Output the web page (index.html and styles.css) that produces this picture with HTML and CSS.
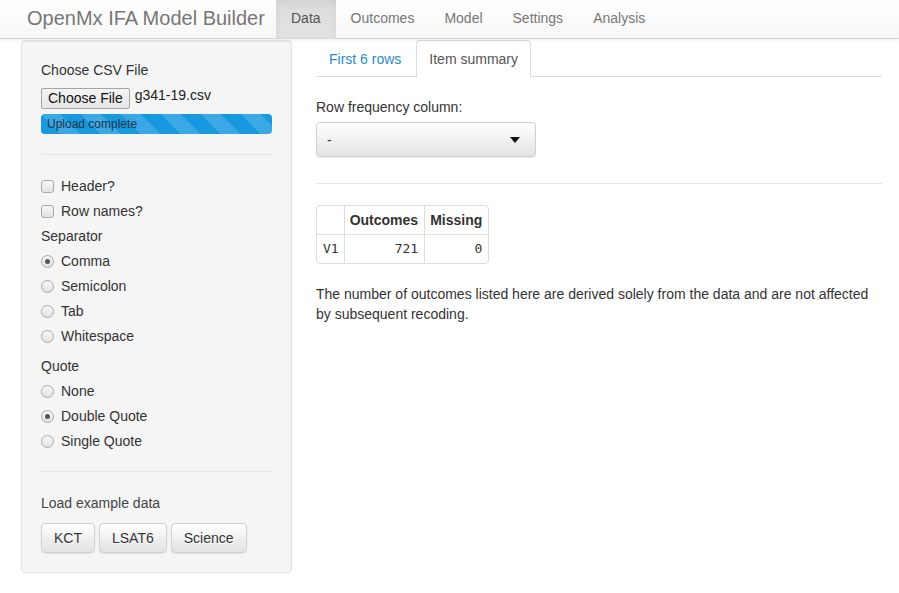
FILE: index.html
```html
<!DOCTYPE html>
<html>
<head>
<meta charset="utf-8">
<title>OpenMx IFA Model Builder</title>
<link rel="stylesheet" href="styles.css">
</head>
<body>
<div class="navbar">
  <span class="brand">OpenMx IFA Model Builder</span>
  <ul class="nav">
    <li class="active"><a>Data</a></li>
    <li><a>Outcomes</a></li>
    <li><a>Model</a></li>
    <li><a>Settings</a></li>
    <li><a>Analysis</a></li>
  </ul>
</div>
<div class="page">
  <div class="well">
    <div class="label first">Choose CSV File</div>
    <div class="file-row">
      <span class="file-btn">Choose File</span>
      <span class="file-name">g341-19.csv</span>
    </div>
    <div class="progress"><div class="progress-bar">Upload complete</div></div>
    <div class="rule"></div>
    <div class="opt"><span class="cb"></span>Header?</div>
    <div class="opt"><span class="cb"></span>Row names?</div>
    <div class="label">Separator</div>
    <div class="opt"><span class="rb on"></span>Comma</div>
    <div class="opt"><span class="rb"></span>Semicolon</div>
    <div class="opt"><span class="rb"></span>Tab</div>
    <div class="opt"><span class="rb"></span>Whitespace</div>
    <div class="label group">Quote</div>
    <div class="opt"><span class="rb"></span>None</div>
    <div class="opt"><span class="rb on"></span>Double Quote</div>
    <div class="opt"><span class="rb"></span>Single Quote</div>
    <div class="rule rule2"></div>
    <div class="label example">Load example data</div>
    <div class="btns">
      <span class="btn">KCT</span>
      <span class="btn">LSAT6</span>
      <span class="btn">Science</span>
    </div>
  </div>
  <div class="main">
    <ul class="tabs">
      <li><a class="tab link">First 6 rows</a></li>
      <li><a class="tab current">Item summary</a></li>
    </ul>
    <div class="label field">Row frequency column:</div>
    <div class="select"><span>-</span><span class="caret"></span></div>
    <div class="hr"></div>
    <table class="summary">
      <thead>
        <tr><th></th><th>Outcomes</th><th>Missing</th></tr>
      </thead>
      <tbody>
        <tr><td class="name">V1</td><td>721</td><td>0</td></tr>
      </tbody>
    </table>
    <p class="note">The number of outcomes listed here are derived solely from the data and are not affected by subsequent recoding.</p>
  </div>
</div>
</body>
</html>
```

FILE: styles.css
```css
* { box-sizing: border-box; }
html, body { margin: 0; padding: 0; }
body {
  font-family: "Liberation Sans", Arial, sans-serif;
  font-size: 14px;
  line-height: 20px;
  color: #333;
  background: #fff;
}
ul { list-style: none; margin: 0; padding: 0; }

.navbar {
  display: flex;
  height: 39px;
  background: linear-gradient(to bottom, #ffffff 0%, #f7f7f7 100%);
  border-bottom: 1px solid #d6d6d6;
  box-shadow: 0 1px 4px rgba(0,0,0,0.07);
  position: relative;
  z-index: 2;
}
.brand {
  font-size: 20px;
  line-height: 36px;
  color: #777;
  padding: 0 10px 0 27px;
  width: 276px;
  white-space: nowrap;
}
.nav { display: flex; }
.nav a {
  display: block;
  padding: 0 15px;
  line-height: 37px;
  height: 38px;
  color: #777;
}
.nav .active a {
  color: #555;
  background: linear-gradient(to bottom, #dcdcdc 0%, #e3e3e3 100%);
  box-shadow: inset 0 3px 9px rgba(0,0,0,0.06);
}

.page {
  display: flex;
  align-items: flex-start;
  gap: 24px;
  padding: 1px 17px 0 21px;
}

.well {
  width: 271px;
  flex: none;
  background: #f5f5f5;
  border: 1px solid #e3e3e3;
  border-radius: 4px;
  box-shadow: inset 0 1px 1px rgba(0,0,0,0.04);
  padding: 19px 19px 19px 19px;
}
.label { height: 20px; }
.label.first { margin-bottom: 8px; }
.file-row { display: flex; align-items: flex-start; height: 21px; }
.file-btn {
  display: inline-block;
  height: 21px;
  line-height: 18px;
  padding: 0 6px;
  border: 1px solid #a5a5a5;
  border-radius: 2px;
  background: linear-gradient(to bottom, #f4f4f4, #e6e6e6);
  color: #111;
}
.file-name { margin-left: 5px; line-height: 14px; color: #222; }

.progress {
  margin-top: 5px;
  height: 20px;
  border-radius: 4px;
  overflow: hidden;
  background: #e5e5e5;
}
.progress-bar {
  height: 20px;
  width: 100%;
  background-color: #1899df;
  background-image: linear-gradient(45deg, rgba(255,255,255,0.15) 25%, transparent 25%, transparent 50%, rgba(255,255,255,0.15) 50%, rgba(255,255,255,0.15) 75%, transparent 75%, transparent);
  background-size: 40px 40px;
  font-size: 12px;
  line-height: 20px;
  padding-left: 6px;
  color: #1f3444;
}
.rule {
  margin: 20px 0 21px;
  border-top: 1px solid #e6e6e6;
}
.rule2 { margin: 20px 0 21px; }

.opt {
  display: flex;
  align-items: center;
  height: 20px;
  margin-bottom: 5px;
  color: #333;
}
.opt .cb, .opt .rb {
  width: 13px;
  height: 13px;
  margin-right: 7px;
  flex: none;
  border: 1px solid #a9a9a9;
  background: linear-gradient(to bottom, #f8f8f8, #e2e2e2);
}
.cb { border-radius: 3px; }
.rb { border-radius: 50%; position: relative; }
.rb.on::after {
  content: "";
  position: absolute;
  left: 3px;
  top: 3px;
  width: 5px;
  height: 5px;
  border-radius: 50%;
  background: #555;
}
.label + .opt { margin-top: 5px; }
.label.group { margin-top: 10px; }
.label.example { color: #444; }

.btns { display: flex; gap: 4px; margin-top: 10px; }
.btn {
  display: inline-block;
  height: 30px;
  line-height: 20px;
  padding: 4px 12px;
  border: 1px solid #d0d0d0;
  border-radius: 4px;
  background: linear-gradient(to bottom, #ffffff 0%, #e2e2e2 100%);
  box-shadow: 0 1px 1px rgba(0,0,0,0.08);
  text-shadow: 0 1px 0 #fff;
  color: #333;
}

.main { flex: 1; min-width: 0; }
.tabs {
  display: flex;
  height: 37px;
  border-bottom: 1px solid #ddd;
}
.tabs li { margin-right: 2px; }
.tab {
  display: block;
  padding: 8px 12px;
  border: 1px solid transparent;
  border-radius: 4px 4px 0 0;
  line-height: 20px;
}
.tab.link { color: #2a8ad0; }
.tab.current {
  color: #555;
  background: #fff;
  border-color: #ddd #ddd transparent;
  height: 38px;
}
.label.field { margin-top: 20px; }
.select {
  margin-top: 5px;
  width: 220px;
  height: 35px;
  display: flex;
  align-items: center;
  justify-content: space-between;
  padding: 0 15px 0 10px;
  border: 1px solid #d0d0d0;
  border-radius: 4px;
  background: linear-gradient(to bottom, #ffffff 0%, #e3e3e3 100%);
  box-shadow: 0 1px 1px rgba(0,0,0,0.08);
  color: #333;
}
.caret {
  width: 0;
  height: 0;
  border-top: 6px solid #111;
  border-left: 5px solid transparent;
  border-right: 5px solid transparent;
}
.hr {
  margin-top: 26px;
  border-top: 1px solid #e6e6e6;
}
.summary {
  margin-top: 21px;
  border-collapse: separate;
  border-spacing: 0;
  border: 1px solid #ddd;
  border-radius: 4px;
}
.summary th, .summary td {
  border-left: 1px solid #ddd;
  border-top: 1px solid #ddd;
}
.summary th:first-child, .summary td:first-child { border-left: 0; }
.summary thead th { border-top: 0; }
.summary th {
  padding: 4px 6px 4px 5px;
  text-align: left;
  font-weight: bold;
  line-height: 20px;
}
.summary td {
  padding: 4px 6px 4px 6px;
  text-align: right;
  line-height: 20px;
  font-family: "DejaVu Sans Mono", "Liberation Mono", monospace;
  font-size: 13px;
}
.summary td.name { text-align: left; padding-right: 5px; }
.note { margin: 20px 0 0; }
```
